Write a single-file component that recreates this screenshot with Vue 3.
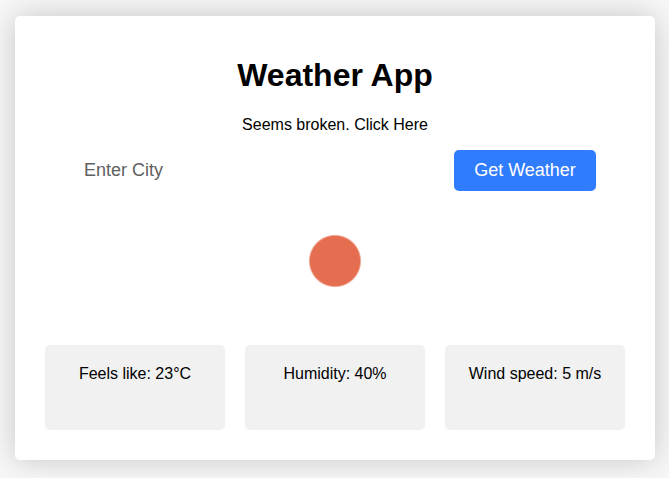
<script setup>
const details = ['Feels like: 23°C', 'Humidity: 40%', 'Wind speed: 5 m/s']
</script>

<template>
  <div class="page">
    <main class="card">
      <h1>Weather App</h1>
      <p class="hint">Seems broken. Click Here</p>
      <form class="search" @submit.prevent>
        <input type="text" placeholder="Enter City" />
        <button type="submit">Get Weather</button>
      </form>
      <div class="icon">
        <svg width="100" height="100" viewBox="0 0 100 100">
          <defs>
            <radialGradient id="sun">
              <stop offset="0.93" stop-color="#e66e50" />
              <stop offset="1" stop-color="#e66e50" stop-opacity="0.1" />
            </radialGradient>
          </defs>
          <circle cx="50" cy="50" r="26.5" fill="url(#sun)" />
        </svg>
      </div>
      <section class="details">
        <div v-for="item in details" :key="item" class="detail">{{ item }}</div>
      </section>
    </main>
  </div>
</template>

<style>
body {
  margin: 0;
  background: #f7f7f7;
}
</style>

<style scoped>
.page {
  box-sizing: border-box;
  height: 478px;
  padding: 16px 14px 18px 15px;
  overflow: hidden;
  background: #f7f7f7;
}
.card {
  box-sizing: border-box;
  width: 640px;
  height: 444px;
  padding: 41px 30px 30px;
  background: #fff;
  border-radius: 5px;
  box-shadow: 0 0 30px rgba(0, 0, 0, 0.2);
  font: 16px/18px "Liberation Sans", Arial, sans-serif;
  color: #000;
  text-align: center;
}
h1 {
  margin: 0;
  font-size: 32px;
  line-height: 37px;
}
.hint {
  margin: 22px 0 16px;
}
.search {
  display: flex;
  justify-content: space-between;
  height: 41px;
  padding: 0 29px 0 30px;
}
input {
  width: 320px;
  padding: 0 9px;
  border: 0;
  outline: 0;
  background: transparent;
  font: 18px "Liberation Sans", Arial, sans-serif;
}
input::placeholder {
  color: #606060;
}
button {
  width: 142px;
  padding: 0;
  border: 0;
  border-radius: 5px;
  background: #307cff;
  color: #fff;
  font: 18px "Liberation Sans", Arial, sans-serif;
}
.icon {
  height: 100px;
  margin: 20px 0 34px;
}
.icon svg {
  display: block;
  margin: 0 auto;
}
.details {
  display: grid;
  grid-template-columns: repeat(3, 180px);
  gap: 20px;
}
.detail {
  box-sizing: border-box;
  height: 85px;
  padding-top: 20px;
  border-radius: 5px;
  background: #f1f1f1;
}
</style>
